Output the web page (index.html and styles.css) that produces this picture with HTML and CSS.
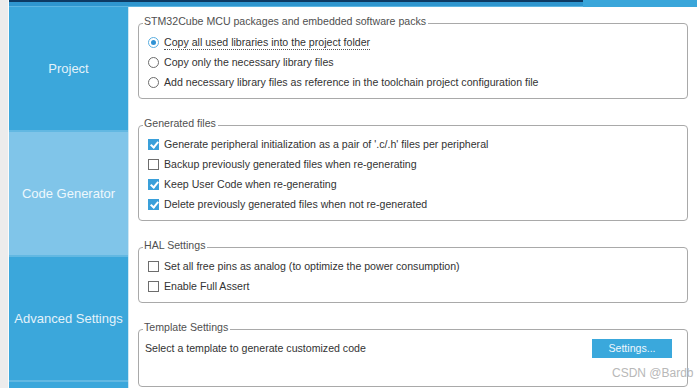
FILE: index.html
```html
<!DOCTYPE html>
<html>
<head>
<meta charset="utf-8">
<link rel="stylesheet" href="styles.css">
</head>
<body>
<div class="frame">
  <div class="edge"></div>
  <div class="main">
    <div class="topbar">
      <div class="tb-left"><span class="tb-a"></span><span class="tb-b"></span></div>
      <div class="tb-right"></div>
    </div>
    <div class="body">
      <nav class="sidebar">
        <div class="nav-item">Project</div>
        <div class="nav-item active">Code Generator</div>
        <div class="nav-item">Advanced Settings</div>
        <div class="nav-item last"></div>
      </nav>
      <div class="content">
        <fieldset class="group g1">
          <legend>STM32Cube MCU packages and embedded software packs</legend>
          <div class="row"><span class="radio on"></span><span class="focus">Copy all used libraries into the project folder</span></div>
          <div class="row"><span class="radio"></span><span>Copy only the necessary library files</span></div>
          <div class="row"><span class="radio"></span><span>Add necessary library files as reference in the toolchain project configuration file</span></div>
        </fieldset>
        <fieldset class="group g2">
          <legend>Generated files</legend>
          <div class="row"><span class="check on"></span><span>Generate peripheral initialization as a pair of '.c/.h' files per peripheral</span></div>
          <div class="row"><span class="check"></span><span>Backup previously generated files when re-generating</span></div>
          <div class="row"><span class="check on"></span><span>Keep User Code when re-generating</span></div>
          <div class="row"><span class="check on"></span><span>Delete previously generated files when not re-generated</span></div>
        </fieldset>
        <fieldset class="group g3">
          <legend>HAL Settings</legend>
          <div class="row"><span class="check"></span><span>Set all free pins as analog (to optimize the power consumption)</span></div>
          <div class="row"><span class="check"></span><span>Enable Full Assert</span></div>
        </fieldset>
        <fieldset class="group g4">
          <legend>Template Settings</legend>
          <div class="trow"><span>Select a template to generate customized code</span><button class="btn">Settings...</button></div>
        </fieldset>
      </div>
    </div>
  </div>
</div>
<div class="watermark">CSDN @Bardb</div>
</body>
</html>
```

FILE: styles.css
```css
* { box-sizing: border-box; }
html, body { margin: 0; padding: 0; }
body {
  width: 697px;
  height: 388px;
  overflow: hidden;
  background: #fff;
  font-family: "Liberation Sans", Arial, sans-serif;
  font-size: 10.6px;
  color: #333;
  position: relative;
}
.frame { display: flex; height: 388px; }
.edge { width: 9px; background: #ececec; border-right: 1px solid #fbfbfb; flex: none; }
.main { flex: 1; display: flex; flex-direction: column; min-height: 0; }
.topbar { height: 7px; display: flex; flex: none; }
.tb-left { width: 574px; display: flex; flex-direction: column; }
.tb-a { height: 2px; background: #0d3a63; }
.tb-b { height: 5px; background: #2f96cf; border-bottom: 1px solid #5db6e2; }
.tb-right { flex: 1; background: #3aa6da; }
.body { flex: 1; display: flex; min-height: 0; }
.sidebar { width: 120px; flex: none; display: flex; flex-direction: column; border-right: 1px solid #cfe7f3; }
.nav-item {
  height: 125px;
  flex: none;
  display: flex;
  align-items: center;
  justify-content: center;
  background: #3ba7db;
  color: #e3f2fa;
  font-size: 13px;
  border-bottom: 2px solid #62b8e2;
}
.nav-item.active { background: #80c5e9; color: #eef8fd; }
.nav-item.last { flex: 1; border-bottom: 0; }
.content { flex: 1; padding: 7px 9px 0 9px; display: flex; flex-direction: column; }
.group {
  margin: 0 0 17px 0;
  border: 1px solid #a9a9a9;
  border-radius: 4px;
  padding: 0 0 6px 9px;
  min-width: 0;
  flex: none;
}
.group legend {
  padding: 0 2px 4px 1px;
  margin-left: -5px;
  color: #505050;
  font-size: 10.6px;
  line-height: 14px;
}
.row { height: 20px; display: flex; align-items: center; gap: 5px; white-space: nowrap; }
.radio {
  width: 11px; height: 11px; border-radius: 50%;
  border: 1px solid #6d6d6d; background: #fff; flex: none; position: relative;
}
.radio.on { border-color: #5aaee0; }
.radio.on::after {
  content: ""; position: absolute; left: 2px; top: 2px; width: 5px; height: 5px;
  border-radius: 50%; background: #2f92d4;
}
.check {
  width: 11px; height: 11px; border: 1px solid #6d6d6d; background: #fff; flex: none; position: relative;
}
.check.on { background: #3aa0da; border-color: #3aa0da; }
.check.on::after {
  content: ""; position: absolute; left: 3px; top: 0px; width: 3px; height: 6px;
  border: solid #fff; border-width: 0 2px 2px 0; transform: rotate(40deg);
}
.focus { border-bottom: 1px dotted #555; line-height: 13px; padding-top: 1px; }
.g4 { padding-left: 6px; padding-bottom: 28px; margin-bottom: 0; }
.g4 legend { margin-left: -2px; }
.trow { display: flex; align-items: center; justify-content: space-between; height: 20px; padding-right: 15px; }
.btn {
  width: 80px; height: 19px; border: 0; background: #3aa8dc; color: #eef7fc;
  font-family: "Liberation Sans", Arial, sans-serif; font-size: 10.6px; padding: 0;
}
.watermark {
  position: absolute; left: 612px; top: 366px; color: #b8b8b8; font-size: 12px;
  font-family: "Liberation Sans", Arial, sans-serif;
}
```
